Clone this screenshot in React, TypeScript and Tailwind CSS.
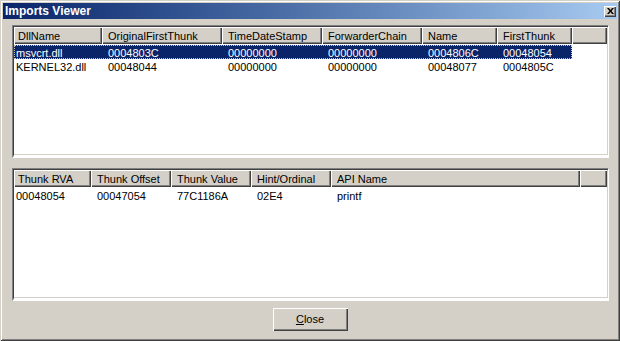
import React from 'react';

const font = { fontFamily: '"Liberation Sans", Arial, sans-serif' };

const topCols = ['DllName', 'OriginalFirstThunk', 'TimeDateStamp', 'ForwarderChain', 'Name', 'FirstThunk'];
const topRows = [
  ['msvcrt.dll', '0004803C', '00000000', '00000000', '0004806C', '00048054'],
  ['KERNEL32.dll', '00048044', '00000000', '00000000', '00048077', '0004805C'],
];

const bottomCols = ['Thunk RVA', 'Thunk Offset', 'Thunk Value', 'Hint/Ordinal', 'API Name'];
const bottomRows = [['00048054', '00047054', '77C1186A', '02E4', 'printf']];

const headerCell =
  'h-[17px] leading-[19px] bg-[#d4d0c8] text-black whitespace-nowrap overflow-hidden shadow-[inset_1px_1px_0_#ffffff,inset_-1px_-1px_0_#404040,inset_-2px_-2px_0_#808080]';

function ListView({
  cols,
  rows,
  headGrid,
  rowGrid,
  selected,
}: {
  cols: string[];
  rows: string[][];
  headGrid: string;
  rowGrid: string;
  selected?: number;
}) {
  return (
    <div className="flex-1 min-h-0 bg-white border-2 border-t-[#808080] border-l-[#808080] border-r-white border-b-white">
      <div className="h-full shadow-[inset_1px_1px_0_#404040,inset_-1px_-1px_0_#d4d0c8] -m-[1px] p-[1px] overflow-hidden">
        <div className={`grid ${headGrid}`}>
          {cols.map((c, i) => (
            <div key={c} className={`${headerCell} ${i === 0 ? 'pl-[4px]' : 'pl-[6px]'}`}>
              {c}
            </div>
          ))}
          <div className={headerCell} />
        </div>
        <div className="pt-[1px]">
          {rows.map((r, ri) => (
            <div
              key={ri}
              className={`grid w-fit ${rowGrid} ${
                ri === selected
                  ? 'bg-[#0a246a] text-white outline-1 outline-dotted outline-[#c8c8a8] -outline-offset-1'
                  : 'text-black'
              }`}
            >
              {r.map((v, i) => (
                <div
                  key={i}
                  className={`h-[14px] leading-[16px] whitespace-nowrap overflow-hidden ${
                    i === 0 ? 'pl-[2px]' : 'pl-[6px]'
                  }`}
                >
                  {v}
                </div>
              ))}
            </div>
          ))}
        </div>
      </div>
    </div>
  );
}

export default function App() {
  return (
    <div className="w-[620px] h-[341px] overflow-hidden" style={font}>
      <div className="w-full h-full flex flex-col p-[3px] bg-[#d4d0c8] text-[11px] shadow-[inset_1px_1px_0_#d4d0c8,inset_-1px_-1px_0_#404040,inset_2px_2px_0_#ffffff,inset_-2px_-2px_0_#808080]">
        <div className="h-[16px] shrink-0 flex items-center justify-between bg-linear-to-r from-[#0a246a] to-[#a6caf0] pl-[2px] pr-[1px]">
          <span className="text-white font-bold text-[12px] leading-[16px]">Imports Viewer</span>
          <button className="w-[12px] h-[11px] flex items-center justify-center bg-[#d4d0c8] shadow-[inset_1px_1px_0_#ffffff,inset_-1px_-1px_0_#404040,inset_-2px_-2px_0_#808080]">
            <svg width="7" height="6" viewBox="0 0 7 6" className="-mt-[1px]">
              <path d="M0 0h2l1.5 2L5 0h2L4.5 3 7 6H5L3.5 4 2 6H0l2.5-3z" fill="#000" />
            </svg>
          </button>
        </div>
        <div className="flex-1 min-h-0 flex flex-col pt-[6px] pl-[9px] pr-[8px] pb-[7px]">
          <div className="h-[133px] flex flex-col">
            <ListView
              cols={topCols}
              rows={topRows}
              headGrid="grid-cols-[88px_120px_100px_100px_75px_75px_1fr]"
              rowGrid="grid-cols-[88px_120px_100px_100px_75px_75px]"
              selected={0}
            />
          </div>
          <div className="h-[133px] mt-[10px] flex flex-col">
            <ListView
              cols={bottomCols}
              rows={bottomRows}
              headGrid="grid-cols-[77px_80px_80px_80px_249px_1fr]"
              rowGrid="grid-cols-[77px_80px_80px_80px_249px]"
            />
          </div>
          <div className="mt-[7px] flex justify-center">
            <button className="w-[75px] h-[23px] -ml-[1px] bg-[#d4d0c8] text-black text-[11px] shadow-[inset_1px_1px_0_#ffffff,inset_-1px_-1px_0_#404040,inset_-2px_-2px_0_#808080]">
              <span className="underline underline-offset-[1px]">C</span>lose
            </button>
          </div>
        </div>
      </div>
    </div>
  );
}
